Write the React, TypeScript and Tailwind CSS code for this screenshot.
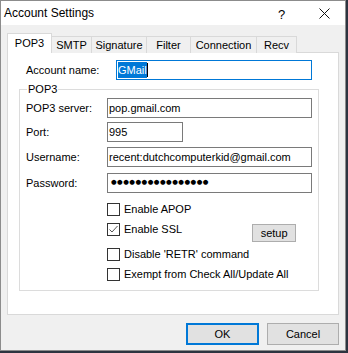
import React from "react";

const font = { fontFamily: '"Liberation Sans", Arial, sans-serif' };

function Checkbox({ checked, label }: { checked?: boolean; label: string }) {
  return (
    <div className="flex items-center h-[13px]">
      <div className="w-[13px] h-[13px] border border-[#333333] bg-white flex items-center justify-center shrink-0">
        {checked && (
          <svg width="11" height="11" viewBox="0 0 11 11">
            <polyline points="1.5,5.5 4,8 9.5,2" fill="none" stroke="#555" strokeWidth="1" />
          </svg>
        )}
      </div>
      <span className="ml-[4px] text-[11px] text-black leading-[13px]">{label}</span>
    </div>
  );
}

function Field({ label, value, width, mt }: { label: string; value: React.ReactNode; width: string; mt: string }) {
  return (
    <div className={`flex items-center ${mt}`}>
      <div className="w-[87px] pl-[6px] text-[11px] text-black">{label}</div>
      <div className={`${width} h-[20px] border border-[#7a7a7a] bg-white flex items-center pl-[1px] text-[11px] text-black`}>
        {value}
      </div>
    </div>
  );
}

export default function App() {
  const tabs = [
    { name: "SMTP", w: "w-[40px]" },
    { name: "Signature", w: "w-[55px]" },
    { name: "Filter", w: "w-[44px]" },
    { name: "Connection", w: "w-[66px]" },
    { name: "Recv", w: "w-[40px]" },
  ];
  return (
    <div className="w-[348px] h-[353px] bg-[#2d3440]" style={font}>
      <div className="w-[346px] h-[351px] border border-[#8c8c8c] bg-[#f0f0f0] flex flex-col">
        {/* title bar */}
        <div className="h-[24px] bg-white flex items-center relative">
          <span className="pl-[3px] text-[12px] text-black">Account Settings</span>
          <span className="absolute left-[277px] top-[4px] text-[13px] text-black">?</span>
          <svg className="absolute left-[318px] top-[7px]" width="11" height="11" viewBox="0 0 11 11">
            <path d="M0.5 0.5 L10.5 10.5 M10.5 0.5 L0.5 10.5" stroke="#111" strokeWidth="1" />
          </svg>
        </div>
        {/* tabs */}
        <div className="flex items-end ml-[6px] mt-[8px] h-[20px] relative z-10">
          <div className="w-[45px] h-[20px] bg-white border border-[#d9d9d9] border-b-0 flex items-center justify-center text-[11px] text-black pb-[1px]">
            POP3
          </div>
          {tabs.map((t) => (
            <div
              key={t.name}
              className={`${t.w} h-[17px] bg-[#f0f0f0] border border-[#d9d9d9] border-l-0 border-b-0 flex items-center justify-center text-[11px] text-black`}
            >
              {t.name}
            </div>
          ))}
        </div>
        {/* panel */}
        <div className="ml-[6px] w-[332px] h-[263px] -mt-[1px] border border-[#d9d9d9] bg-white">
          <div className="flex items-center mt-[7px]">
            <div className="w-[108px] pl-[18px] text-[11px] text-black">Account name:</div>
            <div className="w-[196px] h-[20px] border border-[#0078d7] bg-white flex items-center pl-[1px] text-[11px]">
              <span className="bg-[#0078d7] text-white leading-[16px] px-[0px]">GMail</span>
              <span className="w-[1px] h-[14px] bg-black"></span>
            </div>
          </div>
          <div className="relative ml-[11px] mt-[9px] w-[300px] h-[202px] border border-[#dcdcdc]">
            <span className="absolute left-[7px] -top-[8px] bg-white px-[1px] text-[11px] text-black leading-[14px]">POP3</span>
            <Field label="POP3 server:" value="pop.gmail.com" width="w-[205px]" mt="mt-[8px]" />
            <Field label="Port:" value="995" width="w-[76px]" mt="mt-[4px]" />
            <Field label="Username:" value="recent:dutchcomputerkid@gmail.com" width="w-[205px]" mt="mt-[5px]" />
            <Field
              label="Password:"
              value={<span className="text-[6.5px] tracking-[0.45px] pl-[2px]" style={{ fontFamily: '"DejaVu Sans", sans-serif' }}>●●●●●●●●●●●●●●●●</span>}
              width="w-[205px]"
              mt="mt-[6px]"
            />
            <div className="ml-[87px] mt-[10px] flex flex-col">
              <Checkbox label="Enable APOP" />
              <div className="flex items-center mt-[7px] h-[13px]">
                <Checkbox checked label="Enable SSL" />
                <div className="ml-[70px] mt-[7px] w-[44px] h-[18px] bg-[#e1e1e1] border border-[#adadad] flex items-center justify-center text-[11px] text-black">
                  setup
                </div>
              </div>
              <div className="mt-[12px]">
                <Checkbox label="Disable 'RETR' command" />
              </div>
              <div className="mt-[7px]">
                <Checkbox label="Exempt from Check All/Update All" />
              </div>
            </div>
          </div>
        </div>
        {/* buttons */}
        <div className="flex mt-[8px] ml-[185px] gap-[8px]">
          <div className="w-[73px] h-[22px] bg-[#e1e1e1] border-2 border-[#0078d7] flex items-center justify-center text-[11px] text-black">
            OK
          </div>
          <div className="w-[72px] h-[22px] bg-[#e1e1e1] border border-[#adadad] flex items-center justify-center text-[11px] text-black">
            Cancel
          </div>
        </div>
      </div>
    </div>
  );
}
